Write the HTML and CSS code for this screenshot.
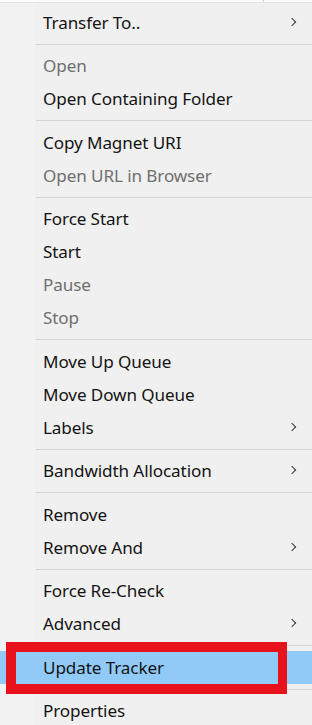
FILE: index.html
```html
<!DOCTYPE html>
<html>
<head>
<meta charset="utf-8">
<link rel="stylesheet" href="styles.css">
</head>
<body>
<div class="topstrip"><span class="coldiv"></span></div>
<div class="menu">
  <div class="item">Transfer To..<span class="chev"></span></div>
  <div class="sep"></div>
  <div class="item dis">Open</div>
  <div class="item">Open Containing Folder</div>
  <div class="sep"></div>
  <div class="item">Copy Magnet URI</div>
  <div class="item dis">Open URL in Browser</div>
  <div class="sep"></div>
  <div class="item">Force Start</div>
  <div class="item">Start</div>
  <div class="item dis">Pause</div>
  <div class="item dis">Stop</div>
  <div class="sep"></div>
  <div class="item">Move Up Queue</div>
  <div class="item">Move Down Queue</div>
  <div class="item">Labels<span class="chev"></span></div>
  <div class="sep"></div>
  <div class="item">Bandwidth Allocation<span class="chev"></span></div>
  <div class="sep"></div>
  <div class="item">Remove</div>
  <div class="item">Remove And<span class="chev"></span></div>
  <div class="sep"></div>
  <div class="item">Force Re-Check</div>
  <div class="item">Advanced<span class="chev"></span></div>
  <div class="sep"></div>
  <div class="item hl">Update Tracker</div>
  <div class="sep"></div>
  <div class="item">Properties</div>
</div>
<div class="redbox"></div>
</body>
</html>
```
FILE: styles.css
```css
html, body {
  margin: 0;
  padding: 0;
  background: #f0f0f0;
  height: 725px;
  overflow: hidden;
}
body {
  position: relative;
  font-family: "Noto Sans", "Open Sans", sans-serif;
}
.topstrip {
  height: 2px;
  background: #fbfbfb;
  position: relative;
}
.coldiv {
  position: absolute;
  left: 263px;
  top: 0;
  width: 1px;
  height: 2px;
  background: #d0d0d0;
}
.menu {
  border-top: 1px solid #e3e3e3;
  padding-top: 2.5px;
  background: linear-gradient(to right, #f2f2f2 0, #f2f2f2 35px, #f0f0f0 35px);
}
.item {
  height: 33px;
  line-height: 33px;
  padding-left: 43px;
  font-size: 17.1px;
  color: #141414;
  position: relative;
  letter-spacing: -0.1px;
}
.item.dis {
  color: #6f6f6f;
}
.item.hl {
  background: #91c9f7;
}
.sep {
  height: 10.5px;
  position: relative;
}
.sep::after {
  content: "";
  position: absolute;
  left: 36px;
  right: 0;
  top: 5px;
  height: 1px;
  background: #d5d5d5;
}
.chev {
  position: absolute;
  left: 289px;
  top: 13px;
  width: 5px;
  height: 5px;
  border-right: 1.6px solid #3a3a3a;
  border-top: 1.6px solid #3a3a3a;
  transform: rotate(45deg);
  transform-origin: center;
}
.redbox {
  position: absolute;
  left: 6px;
  top: 642px;
  width: 262px;
  height: 32px;
  border: 10px solid #e8121c;
  border-right-width: 9px;
}
```
